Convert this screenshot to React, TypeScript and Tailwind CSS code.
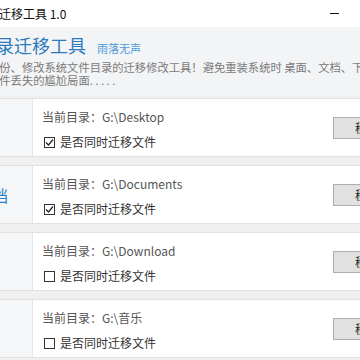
import React from "react";

const font = { fontFamily: '"Noto Sans CJK SC", "Noto Sans", sans-serif' };

type Row = { path: string; checked: boolean; label?: string };

const rows: Row[] = [
  { path: "G:\\Desktop", checked: true },
  { path: "G:\\Documents", checked: true, label: "文档" },
  { path: "G:\\Download", checked: false },
  { path: "G:\\音乐", checked: false },
];

function Check({ checked }: { checked: boolean }) {
  return (
    <div className="w-[11px] h-[11px] border border-[#333333] bg-white flex items-center justify-center shrink-0">
      {checked && (
        <svg width="9" height="9" viewBox="0 0 9 9">
          <path d="M1 4.5 L3.5 7 L8 1.5" fill="none" stroke="#222" strokeWidth="1.2" />
        </svg>
      )}
    </div>
  );
}

export default function App() {
  return (
    <div style={font} className="w-[360px] h-[360px] overflow-hidden bg-[#f0f0f0] flex flex-col">
      <div className="h-[27px] shrink-0 bg-white flex items-center justify-between">
        <div className="text-[12px] text-[#111] whitespace-nowrap -ml-[25px] leading-none">目录迁移工具 1.0</div>
        <div className="w-[9px] h-[1px] bg-[#111] mr-[21px]" />
      </div>
      <div className="h-[69px] shrink-0 bg-[#f3f4f6] flex flex-col">
        <div className="flex items-end mt-[7px] whitespace-nowrap">
          <div className="text-[18px] leading-[22px] text-[#2b7bbd] -ml-[22px]">目录迁移工具</div>
          <div className="text-[11px] leading-[16px] text-[#4c9bd9] ml-[11px]">雨落无声</div>
        </div>
        <div className="mt-[5px] text-[11.3px] leading-[13px] text-[#7a7a7a] whitespace-nowrap -ml-[12px]">
          备份、修改系统文件目录的迁移修改工具！避免重装系统时 桌面、文档、下载等
        </div>
        <div className="text-[11.3px] leading-[13px] text-[#7a7a7a] whitespace-nowrap -ml-[12px]">
          文件丢失的尴尬局面<span className="tracking-[2.5px]">.....</span>
        </div>
      </div>
      <div className="flex flex-col gap-[8px] pt-[2px]">
        {rows.map((r, i) => (
          <div key={i} className="h-[59px] shrink-0 bg-white border-y border-[#e2e2e2] flex">
            <div className="w-[33px] shrink-0 bg-[#f5f6f8] border-r border-[#e6e6e6] flex items-center overflow-hidden">
              {r.label && (
                <div className="text-[16px] leading-none text-[#2b7fc9] whitespace-nowrap -ml-[24px]">{r.label}</div>
              )}
            </div>
            <div className="flex-1 flex">
              <div className="flex-1 flex flex-col pl-[9px]">
                <div className="mt-[10px] text-[12px] leading-[16px] text-[#555] whitespace-nowrap">
                  当前目录：{r.path}
                </div>
                <div className="mt-[9px] flex items-center gap-[5px] pl-[2px]">
                  <Check checked={r.checked} />
                  <span className="text-[12px] leading-[16px] text-[#333]">是否同时迁移文件</span>
                </div>
              </div>
              <div className="w-[27px] shrink-0 pt-[18px]">
                <div className="h-[22px] w-[50px] bg-[#e1e1e1] border border-[#adadad] text-[12px] text-[#222] leading-[20px] pl-[21px] whitespace-nowrap">
                  移动
                </div>
              </div>
            </div>
          </div>
        ))}
      </div>
    </div>
  );
}
